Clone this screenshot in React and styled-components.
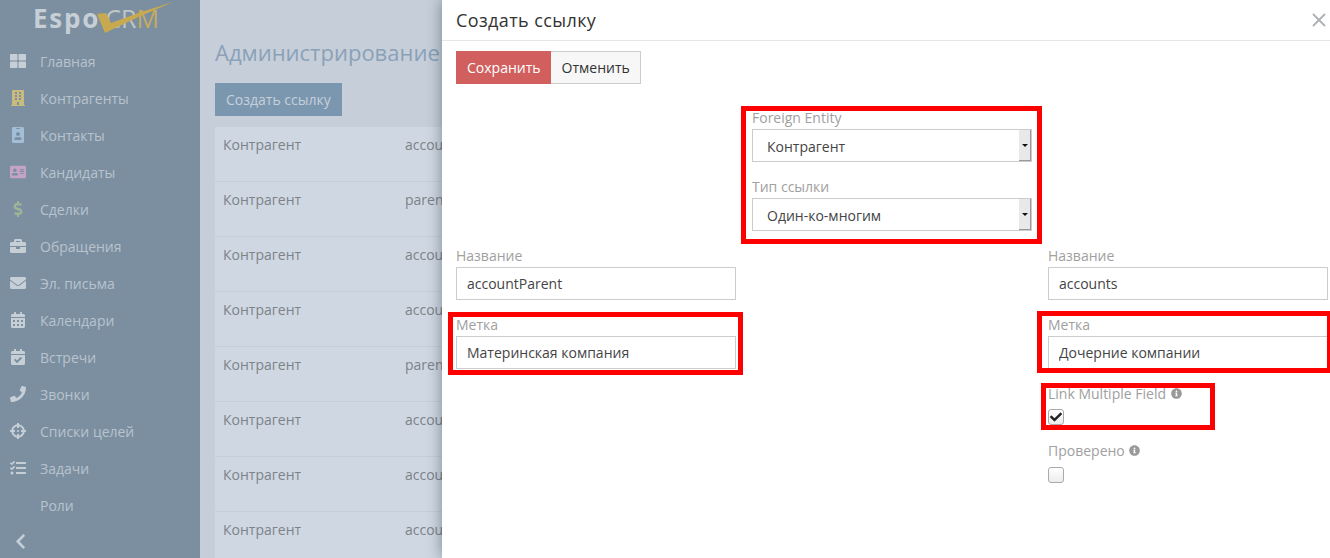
import * as React from 'react'
import styled, { createGlobalStyle } from 'styled-components'
import { X } from 'lucide-react'
import {
  FaThLarge,
  FaBuilding,
  FaIdBadge,
  FaAddressCard,
  FaDollarSign,
  FaBriefcase,
  FaEnvelope,
  FaCalendarAlt,
  FaCalendarCheck,
  FaPhone,
  FaCrosshairs,
  FaTasks,
  FaChevronLeft,
  FaInfoCircle,
  FaCheck,
} from 'react-icons/fa'

const NAV_ITEMS = [
  { label: 'Главная', icon: FaThLarge },
  { label: 'Контрагенты', icon: FaBuilding, color: '#c9bb7c' },
  { label: 'Контакты', icon: FaIdBadge, color: '#a3bfd8' },
  { label: 'Кандидаты', icon: FaAddressCard, color: '#c4a3c6' },
  { label: 'Сделки', icon: FaDollarSign, color: '#9db596' },
  { label: 'Обращения', icon: FaBriefcase },
  { label: 'Эл. письма', icon: FaEnvelope },
  { label: 'Календари', icon: FaCalendarAlt },
  { label: 'Встречи', icon: FaCalendarCheck },
  { label: 'Звонки', icon: FaPhone },
  { label: 'Списки целей', icon: FaCrosshairs },
  { label: 'Задачи', icon: FaTasks },
  { label: 'Роли' },
]

const ROWS = ['account', 'parent', 'account', 'account', 'parent', 'account', 'account', 'account']

const App = () => (
  <Page>
    <GlobalStyle />
    <Sidebar>
      <Logo>
        <LogoEspo>Espo</LogoEspo>
        <LogoCrm>
          <LogoLight>CR</LogoLight>M
        </LogoCrm>
        <LogoCheck viewBox="0 0 76 32">
          <path d="M0 12 L9 11 L14 21 Q45 9 76 0 Q42 14 8 31 Z" fill="#c8a94f" />
        </LogoCheck>
      </Logo>
      {NAV_ITEMS.map(({ label, icon: Icon, color }) => (
        <NavItem key={label}>
          <NavIcon $color={color}>{Icon && <Icon />}</NavIcon>
          {label}
        </NavItem>
      ))}
      <Collapse>
        <FaChevronLeft />
      </Collapse>
    </Sidebar>

    <Content>
      <Heading>Администрирование</Heading>
      <CreateButton>Создать ссылку</CreateButton>
      <LinkTable>
        {ROWS.map((link, i) => (
          <LinkRow key={i}>
            <span>Контрагент</span>
            <span>{link}</span>
          </LinkRow>
        ))}
      </LinkTable>
    </Content>

    <Modal>
      <ModalHeader>
        <ModalTitle>Создать ссылку</ModalTitle>
        <CloseIcon size={22} strokeWidth={2} />
      </ModalHeader>
      <ModalBody>
        <Actions>
          <SaveButton>Сохранить</SaveButton>
          <CancelButton>Отменить</CancelButton>
        </Actions>
        <FormGrid>
          <FormColumn />
          <FormColumn>
            <Marked $top={-2} $right={-10} $bottom={2} $left={-11}>
              <Field>
                <Label>Foreign Entity</Label>
                <FakeSelect>
                  Контрагент
                  <SelectArrow />
                </FakeSelect>
              </Field>
              <Field>
                <Label>Тип ссылки</Label>
                <FakeSelect>
                  Один-ко-многим
                  <SelectArrow />
                </FakeSelect>
              </Field>
            </Marked>
          </FormColumn>
          <FormColumn />

          <FormColumn>
            <Field>
              <Label>Название</Label>
              <TextInput defaultValue="accountParent" />
            </Field>
            <Marked $top={-3} $right={-7} $bottom={9} $left={-8}>
              <Field>
                <Label>Метка</Label>
                <TextInput defaultValue="Материнская компания" />
              </Field>
            </Marked>
          </FormColumn>
          <FormColumn />
          <FormColumn>
            <Field>
              <Label>Название</Label>
              <TextInput defaultValue="accounts" />
            </Field>
            <Marked $top={-4} $right={-4} $bottom={11} $left={-11}>
              <Field>
                <Label>Метка</Label>
                <TextInput defaultValue="Дочерние компании" />
              </Field>
            </Marked>
            <Marked $top={-1} $right={113} $bottom={11} $left={-7}>
              <CheckField>
                <CheckLabel $height={25}>
                  Link Multiple Field <InfoIcon />
                </CheckLabel>
                <CheckBox>
                  <FaCheck />
                </CheckBox>
              </CheckField>
            </Marked>
            <CheckField>
              <CheckLabel $height={26}>
                Проверено <InfoIcon />
              </CheckLabel>
              <CheckBox />
            </CheckField>
          </FormColumn>
        </FormGrid>
      </ModalBody>
    </Modal>
  </Page>
)

export default App

const GlobalStyle = createGlobalStyle`
  html, body {
    margin: 0;
    padding: 0;
  }

  body {
    font-family: "Open Sans", sans-serif;
    font-size: 14px;
    color: #333;
  }

  * {
    box-sizing: border-box;
  }
`

const Page = styled.div`
  position: relative;
  display: flex;
  width: 100%;
  height: 100vh;
  overflow: hidden;
  background: #c6cfd9;
`

const Sidebar = styled.nav`
  flex: 0 0 200px;
  position: relative;
  background: #7b8fa1;
  color: #b9c3cd;
`

const Logo = styled.div`
  position: relative;
  display: flex;
  align-items: baseline;
  height: 42.5px;
  padding-left: 33px;
  line-height: 37px;
`

const LogoEspo = styled.span`
  font-size: 26px;
  font-weight: 700;
  color: #c6ced6;
  letter-spacing: 1.8px;
`

const LogoCrm = styled.span`
  margin-left: 5px;
  font-size: 25px;
  font-weight: 400;
  color: #c4ab62;
`

const LogoLight = styled.span`
  color: #bfc6c4;
`

const LogoCheck = styled.svg`
  position: absolute;
  left: 97px;
  top: 2px;
  width: 76px;
  height: 32px;
`

const NavItem = styled.div`
  display: flex;
  align-items: center;
  height: 37px;
  font-size: 14px;
`

const NavIcon = styled.span`
  flex: 0 0 40px;
  display: flex;
  justify-content: center;
  padding-right: 4px;
  font-size: 16px;
  color: ${({ $color }) => $color || '#c6ced6'};
`

const Collapse = styled.div`
  position: absolute;
  left: 12px;
  bottom: 6px;
  font-size: 17px;
  line-height: 17px;
  color: #c6ced6;
`

const Content = styled.main`
  flex: 1;
  padding: 37px 0 0 15px;
`

const Heading = styled.h1`
  margin: 0 0 16px;
  font-size: 22px;
  line-height: 30px;
  font-weight: 400;
  color: #8aa1b8;
`

const CreateButton = styled.div`
  display: inline-block;
  height: 33px;
  padding: 0 11px;
  line-height: 33px;
  background: #7b97b0;
  color: #c6d0da;
`

const LinkTable = styled.div`
  margin-top: 11px;
  background: #cfd8e2;
`

const LinkRow = styled.div`
  display: grid;
  grid-template-columns: 182px 1fr;
  height: 55px;
  padding: 8px 8px 0;
  line-height: 20px;
  color: #7d8288;
  border-bottom: 1px solid #c5ced8;
`

const Modal = styled.section`
  position: absolute;
  top: 0;
  right: 0;
  bottom: 0;
  left: 442px;
  background: #fff;
  box-shadow: 0 0 14px rgba(20, 30, 45, 0.45);
`

const ModalHeader = styled.header`
  display: flex;
  align-items: center;
  justify-content: space-between;
  height: 41px;
  padding: 0 0 0 14px;
  border-bottom: 1px solid #e5e5e5;
`

const ModalTitle = styled.h2`
  margin: 0;
  font-size: 18px;
  letter-spacing: 0.4px;
  font-weight: 400;
  color: #333;
`

const CloseIcon = styled(X)`
  color: #aeb1b5;
`

const ModalBody = styled.div`
  padding: 10px 2px 0 14px;
`

const Actions = styled.div`
  display: flex;
  height: 33px;
  margin-bottom: 24px;
`

const SaveButton = styled.div`
  padding: 0 10px 0 11px;
  line-height: 33px;
  background: #d05f5e;
  color: #fff;
`

const CancelButton = styled.div`
  padding: 0 10px 0 11px;
  line-height: 31px;
  background: #f7f7f7;
  border: 1px solid #ccc;
  border-left: 0;
  color: #333;
`

const FormGrid = styled.div`
  display: grid;
  grid-template-columns: repeat(3, 280px);
  column-gap: 16px;
`

const FormColumn = styled.div`
  min-width: 0;
`

const Marked = styled.div`
  position: relative;

  &::after {
    content: '';
    position: absolute;
    top: ${({ $top }) => $top}px;
    right: ${({ $right }) => $right}px;
    bottom: ${({ $bottom }) => $bottom}px;
    left: ${({ $left }) => $left}px;
    border: 5px solid #f00;
    pointer-events: none;
  }
`

const Field = styled.div`
  height: 69px;
`

const CheckField = styled.div`
  height: 57px;
`

const Label = styled.label`
  display: block;
  height: 21px;
  line-height: 20px;
  color: #a0a0a0;
`

const CheckLabel = styled(Label)`
  height: ${({ $height }) => $height}px;
`

const fieldBox = `
  display: block;
  width: 100%;
  height: 33px;
  padding: 0 10px;
  border: 1px solid #ccc;
  background: #fff;
  font-family: "Open Sans", sans-serif;
  font-size: 14px;
  line-height: 31px;
  color: #444;
`

const TextInput = styled.input`
  ${fieldBox}
  outline: none;
`

const FakeSelect = styled.div`
  ${fieldBox}
  position: relative;
  padding-left: 14px;
  line-height: 33px;
`

const SelectArrow = styled.span`
  position: absolute;
  top: 0;
  right: 0;
  bottom: 0;
  width: 12px;
  background: #e9e9e9;
  border-right: 1px solid #999;
  border-bottom: 1px solid #999;

  &::after {
    content: '';
    position: absolute;
    top: 14px;
    left: 3px;
    border-style: solid;
    border-width: 3px 3px 0;
    border-color: #111 transparent transparent;
  }
`

const InfoIcon = styled(FaInfoCircle)`
  width: 11px;
  height: 11px;
  margin-left: 1px;
  color: #999;
`

const CheckBox = styled.span`
  display: flex;
  align-items: center;
  justify-content: center;
  width: 16px;
  height: 16px;
  border: 1px solid #aaa;
  border-radius: 3px;
  background: linear-gradient(#fff, #ececec);
  font-size: 12px;
  color: #222;
`
